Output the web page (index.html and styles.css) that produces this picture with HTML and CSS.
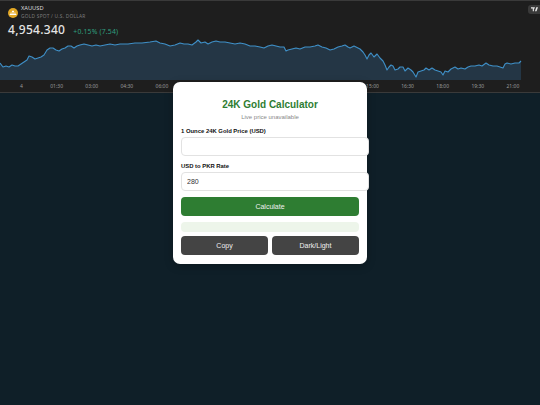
FILE: index.html
```html
<!DOCTYPE html>
<html lang="en">
<head>
<meta charset="utf-8">
<title>24K Gold Calculator</title>
<link rel="stylesheet" href="styles.css">
</head>
<body>
<section class="ticker">
  <svg class="chart" viewBox="0 0 540 80" preserveAspectRatio="none" aria-hidden="true">
    <path class="area" d="M0 63L3 67L6 66L9 67L12 65L15 66L18 66L21 64L24 62L27 60L29 56L32 57L35 59L38 58L41 57L44 55L47 50L50 48L53 48L56 50L59 51L62 49L65 48L68 46L71 46L74 48L77 46L80 45L84 44L88 45L92 46L96 45L100 46L105 45L110 44L115 45L120 44L128 44L135 43L142 43L150 42L156 41L160 43L165 44L170 46L175 45L180 43L184 44L188 44L192 45L196 42L198 40L201 43L205 42L208 44L212 42L216 41L220 42L225 42L230 43L235 44L240 43L245 44L250 46L255 46L260 47L264 48L268 46L272 45L276 46L280 47L284 47L286 51L288 50L292 49L296 48L300 49L305 47L310 47L315 46L318 45L322 47L326 48L330 50L334 49L338 47L342 46L345 45L348 47L350 48L354 46L358 48L360 49L363 52L365 55L367 59L369 55L371 53L374 57L377 54L380 58L383 61L385 65L387 70L389 67L391 65L393 66L395 70L398 69L400 67L403 67L405 71L408 68L411 70L413 72L416 77L418 72L421 71L424 70L426 68L429 70L432 68L435 70L438 71L441 72L443 75L445 71L448 72L451 69L453 68L455 67L458 69L461 68L465 69L468 67L471 66L475 66L479 65L482 66L486 63L489 65L493 66L497 66L500 67L503 68L505 64L507 63L511 64L515 63L519 63L521 61L521 80L0 80Z"/>
    <path class="line" d="M0 63L3 67L6 66L9 67L12 65L15 66L18 66L21 64L24 62L27 60L29 56L32 57L35 59L38 58L41 57L44 55L47 50L50 48L53 48L56 50L59 51L62 49L65 48L68 46L71 46L74 48L77 46L80 45L84 44L88 45L92 46L96 45L100 46L105 45L110 44L115 45L120 44L128 44L135 43L142 43L150 42L156 41L160 43L165 44L170 46L175 45L180 43L184 44L188 44L192 45L196 42L198 40L201 43L205 42L208 44L212 42L216 41L220 42L225 42L230 43L235 44L240 43L245 44L250 46L255 46L260 47L264 48L268 46L272 45L276 46L280 47L284 47L286 51L288 50L292 49L296 48L300 49L305 47L310 47L315 46L318 45L322 47L326 48L330 50L334 49L338 47L342 46L345 45L348 47L350 48L354 46L358 48L360 49L363 52L365 55L367 59L369 55L371 53L374 57L377 54L380 58L383 61L385 65L387 70L389 67L391 65L393 66L395 70L398 69L400 67L403 67L405 71L408 68L411 70L413 72L416 77L418 72L421 71L424 70L426 68L429 70L432 68L435 70L438 71L441 72L443 75L445 71L448 72L451 69L453 68L455 67L458 69L461 68L465 69L468 67L471 66L475 66L479 65L482 66L486 63L489 65L493 66L497 66L500 67L503 68L505 64L507 63L511 64L515 63L519 63L521 61"/>
  </svg>
  <div class="quote">
    <div class="symbol">
      <svg class="coin" viewBox="0 0 12 12" aria-hidden="true">
        <circle cx="6" cy="6" r="6" fill="#e3a825"/>
        <path d="M5 3.200h2l.5 1.800h-3zM2.800 5.600h2.900l.4 1.100H2.400zM6.300 5.600h2.900l.4 1.100H5.900zM2.200 7.200h7.600l.3 1.300H1.900z" fill="#fff"/>
      </svg>
      <div>
        <div class="ticker-name">XAUUSD</div>
        <div class="ticker-desc">GOLD SPOT / U.S. DOLLAR</div>
      </div>
    </div>
    <div class="price-row">
      <span class="price">4,954.340</span>
      <span class="change">+0.15% (7.54)</span>
    </div>
  </div>
  <div class="tv-badge">
    <svg viewBox="0 0 12 7" aria-hidden="true">
      <path d="M0 0h5v7H3V2H0zM9 0h3L9.500 7H6.800zM5.800 0a1.100 1.100 0 1 1 0 2.200a1.100 1.100 0 0 1 0-2.200z" fill="#e8e8e8"/>
    </svg>
  </div>
  <div class="axis">
    <span>4</span><span>01:30</span><span>03:00</span><span>04:30</span><span>06:00</span><span>07:30</span><span>09:00</span><span>10:30</span><span>12:00</span><span>13:30</span><span>15:00</span><span>16:30</span><span>18:00</span><span>19:30</span><span>21:00</span>
  </div>
</section>

<main class="card">
  <h1 class="title">24K Gold Calculator</h1>
  <p class="status">Live price unavailable</p>
  <label class="label" for="gold">1 Ounce 24K Gold Price (USD)</label>
  <input class="field" id="gold" type="text">
  <label class="label" for="rate">USD to PKR Rate</label>
  <input class="field" id="rate" type="text" value="280">
  <button class="btn btn-primary" type="button">Calculate</button>
  <div class="result"></div>
  <div class="actions">
    <button class="btn btn-dark" type="button">Copy</button>
    <button class="btn btn-dark" type="button">Dark/Light</button>
  </div>
</main>
</body>
</html>
```
FILE: styles.css
```css
* { box-sizing: border-box; }
html, body { height: 100%; }
body {
  margin: 0;
  background: #0f1f28;
  font-family: "Liberation Sans", Arial, sans-serif;
  overflow: hidden;
}
.ticker {
  position: relative;
  height: 93px;
  background: #1e1e1e;
  border-top: 1px solid #3a3a3a;
  border-bottom: 1px solid #3a3a3a;
  color: #dbdbdb;
  font-family: "Noto Sans", "Liberation Sans", sans-serif;
}
.chart {
  position: absolute;
  left: 0;
  top: -1px;
  width: 540px;
  height: 80px;
}
.area { fill: #243645; }
.line { fill: none; stroke: #3f90c8; stroke-width: 1.1; stroke-linejoin: round; }
.quote {
  position: absolute;
  left: 8px;
  top: 4px;
}
.symbol { display: flex; align-items: center; gap: 3px; }
.coin { width: 10px; height: 10px; }
.ticker-name { font-size: 5.7px; line-height: 7px; color: #dcdcdc; }
.ticker-desc { font-size: 4.8px; line-height: 8px; color: #7c7c7c; letter-spacing: 0.25px; }
.price-row { display: flex; align-items: baseline; gap: 8px; margin-top: 2px; }
.price { font-size: 12px; line-height: 15px; color: #e4e4e4; letter-spacing: 0.3px; font-weight: 500; }
.change { font-size: 6.8px; color: #2f9e7e; letter-spacing: 0.2px; }
.tv-badge {
  position: absolute;
  right: 0;
  top: 4px;
  width: 12px;
  height: 9px;
  background: #3a3a3a;
  border-radius: 3px 0 0 3px;
  display: flex;
  align-items: center;
  justify-content: center;
}
.tv-badge svg { width: 7px; height: 4.500px; }
.axis {
  position: absolute;
  left: 0;
  right: 0;
  top: 79px;
  height: 12px;
  display: grid;
  grid-template-columns: repeat(15, 35.1px);
  padding-left: 4px;
  font-size: 5px;
  line-height: 12px;
  color: #9a9a9a;
  text-align: center;
}
.card {
  position: absolute;
  left: 173px;
  top: 82px;
  width: 194px;
  height: 182px;
  padding: 16px 8px 0;
  background: #fff;
  border-radius: 7px;
  box-shadow: 0 2px 8px rgba(0, 0, 0, 0.25);
  display: flex;
  flex-direction: column;
}
.title {
  margin: 0;
  font-size: 10px;
  line-height: 13px;
  color: #2e7d32;
  text-align: center;
  font-weight: 700;
}
.status {
  margin: 1.500px 0 0;
  font-size: 6px;
  line-height: 8px;
  color: #888;
  text-align: center;
}
.label {
  margin-top: 6px;
  font-size: 5.9px;
  line-height: 8px;
  font-weight: 700;
  color: #111;
}
.field {
  display: block;
  width: 188px;
  height: 18.500px;
  margin-top: 2.500px;
  padding: 0 5px;
  border: 1px solid #e2e2e2;
  border-radius: 4px;
  background: #fff;
  font: 7px "Liberation Sans", Arial, sans-serif;
  color: #333;
  outline: 0;
}
.btn {
  display: block;
  height: 18.500px;
  padding: 0;
  border: 0;
  border-radius: 4px;
  font: 7px "Liberation Sans", Arial, sans-serif;
  color: #f0f0f0;
}
.btn-primary { margin-top: 6.500px; width: 178px; background: #2e7d32; }
.result {
  height: 10px;
  margin-top: 6.500px;
  width: 178px;
  border-radius: 4px;
  background: #edf5ea;
}
.actions {
  display: flex;
  gap: 4px;
  margin-top: 4px;
  width: 178px;
}
.btn-dark { flex: 1; background: #444; }
```
